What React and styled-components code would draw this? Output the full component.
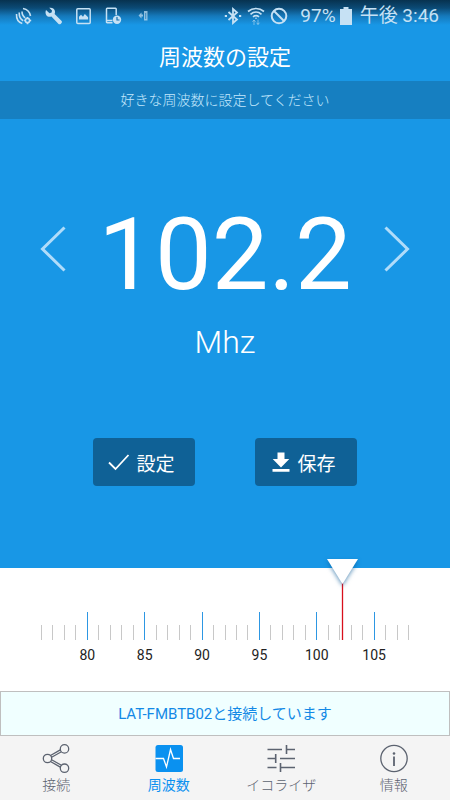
import React, { useState } from 'react';
import styled, { createGlobalStyle } from 'styled-components';

const GlobalStyle = createGlobalStyle`
*{
box-sizing:border-box;
}
body{
margin:0;
background:white;
font-family:Roboto, "Noto Sans CJK JP", sans-serif;
}
button{
font-family:inherit;
border:none;
background:transparent;
padding:0;
cursor:pointer;
}
svg{
display:block;
flex:none;
}
`

const Container = styled.div`
min-height:100vh;
display:flex;
flex-direction:column;
`

const Top = styled.div`
flex:1;
display:flex;
flex-direction:column;
background:#1897e6;
color:white;
`

const StatusBar = styled.div`
height:32px;
display:flex;
justify-content:space-between;
align-items:center;
padding:0 11px 0 15px;
color:#c6e1f4;
font-size:19px;
line-height:32px;
background:linear-gradient(#07324f 0, #0b4a75 8px, #1579bb 16px, #1897e6 25px);
`

const StatusGroup = styled.div`
display:flex;
align-items:center;
gap:${props => props.$gap};
`

const Title = styled.h1`
margin:0;
padding-top:3px;
font-size:22px;
line-height:46px;
font-weight:400;
text-align:center;
`

const SubTitle = styled.p`
margin:0;
background:#167fc1;
color:#c4e8fd;
font-size:14px;
line-height:38px;
font-weight:300;
text-align:center;
`

const Dial = styled.div`
padding:85px 40px 0;
display:flex;
justify-content:space-between;
align-items:center;
`

const Arrow = styled.button`
padding-bottom:12px;
color:#b0dcfa;
`

const Frequency = styled.div`
font-size:101px;
line-height:102px;
`

const Unit = styled.div`
margin-top:16px;
font-size:32px;
line-height:40px;
font-weight:300;
text-align:center;
`

const Actions = styled.div`
display:flex;
justify-content:center;
gap:60px;
padding:76px 0 82px;
`

const Action = styled.button`
&&{
display:flex;
align-items:center;
justify-content:center;
gap:6px;
width:102px;
height:48px;
padding-right:5px;
border-radius:4px;
background:#0f6196;
color:white;
font-size:19px;
font-weight:400;
}
`

const Tuner = styled.div`
background:white;
padding:44px 41px 26px;
`

const Track = styled.div`
position:relative;
display:flex;
justify-content:space-between;
`

const Tick = styled.div`
width:1px;
display:flex;
flex-direction:column;
align-items:center;
`

const Mark = styled.div`
width:1px;
height:${props => props.$major ? '28px' : '15px'};
margin-top:${props => props.$major ? '0' : '13px'};
background:${props => props.$major ? '#2d97e3' : '#c8c8c8'};
`

const TickLabel = styled.span`
margin-top:5px;
font-size:14px;
line-height:20px;
color:#222;
`

const Needle = styled.svg`
position:absolute;
top:-54px;
transform:translateX(-50%);
overflow:visible;
`

const Slider = styled.input`
position:absolute;
top:-54px;
left:-16px;
width:calc(100% + 32px);
height:82px;
margin:0;
opacity:0;
cursor:pointer;
`

const Connection = styled.div`
padding-top:2px;
border:1px solid #bfbfbf;
background:#f0ffff;
color:#1389e6;
font-size:15px;
line-height:41px;
font-weight:400;
text-align:center;
`

const TabBar = styled.nav`
height:64px;
display:flex;
background:#f4f4f4;
`

const Tab = styled.a`
flex:1;
display:flex;
flex-direction:column;
align-items:center;
padding-top:8px;
font-size:14px;
line-height:22px;
font-weight:${props => props.$active ? '400' : '300'};
text-decoration:none;
white-space:nowrap;
color:${props => props.$active ? '#0a91f0' : '#5c6370'};
`

const MIN = 76;
const MAX = 108;

const ticks = [];
for (let f = MIN; f <= MAX; f++) {
  ticks.push(f);
}

const Satellite = () => (
  <svg width="17" height="18" viewBox="0 0 17 18" fill="none" stroke="currentColor" strokeWidth="1.6">
    <path d="M1.500 7c-.2 4.500 2 8.300 5.800 9.500M4.200 5.500c-.1 3.800 1.300 7 4 8.200M7 4.500c0 2.500 1.200 5 3.200 6.300M8 1.500c4 .8 6.800 3.500 7.500 7.500" />
    <circle cx="12.500" cy="13.500" r="2.100" />
    <path d="M12.500 10v1M12.500 16v1.200M9.200 13.500h1M15 13.500h1.200" />
  </svg>
)

const Wrench = () => (
  <svg width="17" height="18" viewBox="0 0 17 18" fill="currentColor">
    <path d="M4.200.8 7 3.600 6.600 5.600 4.500 6.200 1 3C-.2 6.300 1 9 3.500 9.700c1 .3 2 .2 2.900-.2l6.900 7.300c.7.700 1.700.7 2.400.1l.8-.8c.6-.7.6-1.600-.1-2.300L9.600 7C10.400 5 10 3 8.600 1.800 7.300.700 5.800.4 4.200.8Z" />
  </svg>
)

const Picture = () => (
  <svg width="17" height="18" viewBox="0 0 17 18" fill="none" stroke="currentColor" strokeWidth="1.500">
    <rect x="1.800" y="1.800" width="13.400" height="14.800" rx="1" />
    <path d="M4 12.500V9.800l2-2.100 2 2 1.800-2.800 3.300 3.300v2.300Z" fill="currentColor" stroke="none" />
  </svg>
)

const PhoneClock = () => (
  <svg width="17" height="18" viewBox="0 0 17 18" fill="none" stroke="currentColor" strokeWidth="1.500">
    <path d="M7.500 15.800H2.200c-.5 0-.7-.3-.7-.7V2c0-.5.300-.8.700-.8h8.300c.4 0 .7.300.7.800v6M1.500 13.500h6" />
    <circle cx="12" cy="12.800" r="4.200" fill="currentColor" stroke="none" />
    <path d="M12 10v3h2.500" stroke="#1471ae" strokeWidth="1.200" />
  </svg>
)

const SmallArrow = () => (
  <svg width="17" height="18" viewBox="0 0 17 18" opacity=".7" fill="currentColor">
    <path d="M3.500 8.500 6.500 5.500v2h1.500v2H6.500v2ZM9 4h3.500v9.500H9Z" />
    <path d="M10.200 6h1v6h-1Z" fill="#4a95c8" />
  </svg>
)

const Bluetooth = () => (
  <svg width="18" height="18" viewBox="0 0 18 18" fill="none" stroke="currentColor" strokeWidth="1.800">
    <path d="m4.500 5 8.500 7.500L9 16V2l4 3.500L4.500 13" />
    <path d="M.8 9h2.200M15 9h2.200" />
  </svg>
)

const Wifi = () => (
  <svg width="18" height="18" viewBox="0 0 18 18" fill="none" stroke="currentColor" strokeWidth="1.700">
    <path d="M1 4.500c4.800-4 11.200-4 16 0M3.500 7.300c3.300-2.800 7.700-2.800 11 0M6 9.800c1.800-1.500 4.200-1.500 6 0" />
    <circle cx="9" cy="11.200" r=".8" fill="currentColor" stroke="none" />
    <path d="M7 18v-5M5.500 14.800 7 13l1.500 1.800M11 12.500v5M9.500 15.700l1.500 1.800 1.500-1.800" strokeWidth="1" opacity=".55" />
  </svg>
)

const Blocked = () => (
  <svg width="18" height="18" viewBox="0 0 18 18" fill="none" stroke="currentColor" strokeWidth="2">
    <circle cx="9" cy="9" r="7.300" />
    <path d="m4 4 10 10" />
  </svg>
)

const Battery = () => (
  <svg width="12" height="18" viewBox="0 0 12 18" fill="currentColor">
    <path d="M3.500 0h5v2H12v16H0V2h3.500Z" />
  </svg>
)

const Check = () => (
  <svg width="22" height="20" viewBox="0 0 22 20" fill="none" stroke="currentColor" strokeWidth="1.800">
    <path d="m1 10.500 6.500 6.500L20.500 3" />
  </svg>
)

const Download = () => (
  <svg width="20" height="20" viewBox="0 0 20 20" fill="currentColor">
    <path d="M6.500.500h7v6.500h4.800L10 15.500 1.700 7h4.800ZM1.500 17h17v2.800h-17Z" />
  </svg>
)

const ShareIcon = () => (
  <svg width="28" height="30" viewBox="0 0 28 30" fill="none" stroke="currentColor" strokeWidth="1.300">
    <circle cx="5.500" cy="14.500" r="4.200" />
    <circle cx="22.500" cy="4.900" r="4.200" />
    <circle cx="22.500" cy="24.200" r="4.200" />
    <path d="m8.500 11.500 9.800-5.600M9.600 13.300l9.800-5.600M9.600 15.700l9.800 5.600M8.500 17.500l9.800 5.600" />
  </svg>
)

const PulseIcon = () => (
  <svg width="28" height="30" viewBox="0 0 28 30">
    <rect x=".5" y="1" width="27.500" height="27" rx="2.500" fill="currentColor" />
    <path d="M.5 14.500h8l3 8.500 4-17.500 3 9H25" fill="none" stroke="white" strokeWidth="1.300" />
  </svg>
)

const EqualizerIcon = () => (
  <svg width="28" height="30" viewBox="0 0 28 30" fill="none" stroke="currentColor" strokeWidth="1.600">
    <path d="M.5 5.500h14.500M19.500 5.500H28M19.500 1v9M.5 14.500h8M8.700 10v9M13 14.500h15M.5 23.500h9M13.500 19v9M13.500 23.500H28" />
  </svg>
)

const InfoIcon = () => (
  <svg width="28" height="30" viewBox="0 0 28 30" fill="none" stroke="currentColor" strokeWidth="1.300">
    <circle cx="14" cy="14.500" r="13.200" />
    <path d="M14 12.500v9.500" strokeWidth="1.800" />
    <circle cx="14" cy="9.500" r="1.300" fill="currentColor" stroke="none" />
  </svg>
)

const tabs = [
  { label: '接続', icon: <ShareIcon /> },
  { label: '周波数', icon: <PulseIcon />, active: true },
  { label: 'イコライザ', icon: <EqualizerIcon /> },
  { label: '情報', icon: <InfoIcon /> },
]

const App = () => {
  const [frequency, setFrequency] = useState(102.2);

  const tune = value => {
    setFrequency(Math.min(MAX, Math.max(MIN, Math.round(value * 10) / 10)));
  }

  return (
    <Container>
      <GlobalStyle />
      <Top>
        <StatusBar>
          <StatusGroup $gap="13px">
            <Satellite />
            <Wrench />
            <Picture />
            <PhoneClock />
            <SmallArrow />
          </StatusGroup>
          <StatusGroup $gap="12px">
            <StatusGroup $gap="5px">
              <Bluetooth />
              <Wifi />
              <Blocked />
            </StatusGroup>
            <StatusGroup $gap="8px">
              <StatusGroup $gap="4px">
                <span>97%</span>
                <Battery />
              </StatusGroup>
              <span>午後 3:46</span>
            </StatusGroup>
          </StatusGroup>
        </StatusBar>
        <Title>周波数の設定</Title>
        <SubTitle>好きな周波数に設定してください</SubTitle>
        <Dial>
          <Arrow type="button" aria-label="Down" onClick={() => tune(frequency - 0.1)}>
            <svg width="26" height="46" viewBox="0 0 26 46" fill="none" stroke="currentColor" strokeWidth="3">
              <path d="M24.500 1.500 2.500 23l22 21.500" />
            </svg>
          </Arrow>
          <Frequency>{frequency.toFixed(1)}</Frequency>
          <Arrow type="button" aria-label="Up" onClick={() => tune(frequency + 0.1)}>
            <svg width="26" height="46" viewBox="0 0 26 46" fill="none" stroke="currentColor" strokeWidth="3">
              <path d="m1.500 1.500 22 21.500-22 21.500" />
            </svg>
          </Arrow>
        </Dial>
        <Unit>Mhz</Unit>
        <Actions>
          <Action type="button"><Check />設定</Action>
          <Action type="button"><Download />保存</Action>
        </Actions>
      </Top>
      <Tuner>
        <Track>
          {ticks.map(f => (
            <Tick key={f}>
              <Mark $major={f % 5 === 0} />
              {f % 5 === 0 && <TickLabel>{f}</TickLabel>}
            </Tick>
          ))}
          <Needle
            width="32"
            height="82"
            viewBox="0 0 32 82"
            style={{ left: `${(frequency - MIN) / (MAX - MIN) * 100}%` }}
          >
            <path d="M16.500 24v58" stroke="#d8101c" strokeWidth="1.300" />
            <path
              d="M1 1h31L16.500 26Z"
              fill="white"
              style={{ filter: 'drop-shadow(0 2px 2px rgba(10, 90, 150, .6))' }}
            />
          </Needle>
          <Slider
            type="range"
            aria-label="Frequency"
            min={MIN}
            max={MAX}
            step="0.1"
            value={frequency}
            onChange={e => tune(Number(e.target.value))}
          />
        </Track>
      </Tuner>
      <Connection>LAT-FMBTB02と接続しています</Connection>
      <TabBar>
        {tabs.map(tab => (
          <Tab key={tab.label} href="#" $active={tab.active}>
            {tab.icon}
            {tab.label}
          </Tab>
        ))}
      </TabBar>
    </Container>
  );
}

export default App;
